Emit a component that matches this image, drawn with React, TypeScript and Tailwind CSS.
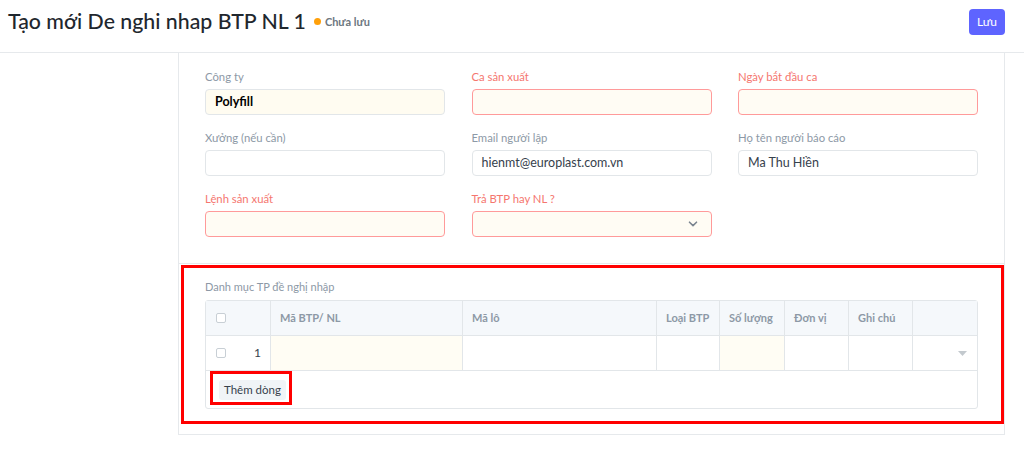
import React from 'react';

const font = { fontFamily: 'Lato, "Noto Sans", sans-serif' };

interface FieldProps {
  label: string;
  value?: string;
  required?: boolean;
  bold?: boolean;
  select?: boolean;
  filled?: boolean;
}

const Field: React.FC<FieldProps> = ({ label, value, required, bold, select, filled }) => {
  const box = required
    ? 'border-[#ff9a9a] bg-[#fffcf4]'
    : filled
    ? 'border-[#e2e6e9] bg-[#fffcf1]'
    : 'border-[#e2e6e9] bg-white';
  return (
    <div className="flex flex-col">
      <div className={`h-[18px] text-[11.3px] leading-[18px] ${required ? 'text-[#f5766f]' : 'text-[#8d99a6]'}`}>{label}</div>
      <div className={`mt-[3px] flex h-[26px] items-center justify-between rounded-[4px] border px-[9px] ${box}`}>
        <span className={`text-[12.5px] ${bold ? 'font-bold text-[#000]' : 'text-[#36414c]'}`}>{value}</span>
        {select && (
          <svg width="10" height="6" viewBox="0 0 10 6" className="mr-[4px]">
            <path d="M1.5 1.2 L5 4.6 L8.5 1.2" fill="none" stroke="#7b8590" strokeWidth="1.6" strokeLinecap="round" strokeLinejoin="round" />
          </svg>
        )}
      </div>
    </div>
  );
};

const Checkbox = () => (
  <span className="inline-block h-[10px] w-[10px] rounded-[2px] border border-[#c8cfd5] bg-white" />
);

const headers = [
  { label: 'Mã BTP/ NL', w: 'w-[192px]' },
  { label: 'Mã lô', w: 'w-[194px]' },
  { label: 'Loại BTP', w: 'w-[63px]' },
  { label: 'Số lượng', w: 'w-[65px]' },
  { label: 'Đơn vị', w: 'w-[64px]' },
  { label: 'Ghi chú', w: 'w-[64px]' },
];

export default function App() {
  return (
    <div className="min-h-screen bg-white" style={font}>
      <header className="flex h-[53px] items-center justify-between border-b border-[#e6e9ec] pb-[8px] pl-[8px] pr-[19px]">
        <div className="flex items-center">
          <h1 className="text-[21.3px] font-medium leading-none text-[#1f272e]">Tạo mới De nghi nhap BTP NL 1</h1>
          <span className="ml-[8px] inline-block h-[7px] w-[7px] rounded-full bg-[#ffa00a]" />
          <span className="ml-[4px] text-[11px] font-bold text-[#6c7680]">Chưa lưu</span>
        </div>
        <button className="h-[26px] w-[36px] rounded-[4px] bg-[#5e64ff] text-[12px] text-white">Lưu</button>
      </header>

      <main className="ml-[178px] w-[827px] border-x border-b border-[#e6e9ec]">
        <section className="grid grid-cols-[240px_240px_240px] justify-between gap-y-[14px] border-b border-[#e6e9ec] px-[26px] pb-[26px] pt-[15px]">
          <Field label="Công ty" value="Polyfill" bold filled />
          <Field label="Ca sản xuất" required />
          <Field label="Ngày bắt đầu ca" required />
          <Field label="Xưởng (nếu cần)" />
          <Field label="Email người lập" value="hienmt@europlast.com.vn" />
          <Field label="Họ tên người báo cáo" value="Ma Thu Hiền" />
          <Field label="Lệnh sản xuất" required />
          <Field label="Trả BTP hay NL ?" required select />
        </section>

        <section className="relative px-[26px] pb-[25px] pt-[14px]">
          <div className="h-[20px] text-[11px] leading-[18px] text-[#8d99a6]">Danh mục TP đề nghị nhập</div>
          <div className="mt-[2px] w-[773px] rounded-[3px] border border-[#e2e6e9]">
            <div className="flex h-[35px] border-b border-[#e2e6e9] bg-[#f5f8fb] text-[11px] font-bold text-[#8d99a6]">
              <div className="flex w-[65px] items-center border-r border-[#e2e6e9] pl-[10px]">
                <Checkbox />
              </div>
              {headers.map(h => (
                <div key={h.label} className={`flex ${h.w} items-center border-r border-[#e2e6e9] pl-[9px]`}>{h.label}</div>
              ))}
              <div className="flex-1" />
            </div>
            <div className="flex h-[35px] border-b border-[#e2e6e9] text-[12px] text-[#36414c]">
              <div className="flex w-[65px] items-center justify-between border-r border-[#e2e6e9] pl-[10px] pr-[9px]">
                <Checkbox />
                <span>1</span>
              </div>
              <div className="w-[192px] border-r border-[#e2e6e9] bg-[#fffdf4]" />
              <div className="w-[194px] border-r border-[#e2e6e9]" />
              <div className="w-[63px] border-r border-[#e2e6e9]" />
              <div className="w-[65px] border-r border-[#e2e6e9] bg-[#fffdf4]" />
              <div className="w-[64px] border-r border-[#e2e6e9]" />
              <div className="w-[64px] border-r border-[#e2e6e9]" />
              <div className="flex flex-1 items-center justify-end pr-[10px]">
                <svg width="9" height="5" viewBox="0 0 9 5">
                  <path d="M0 0 L9 0 L4.5 5 Z" fill="#c3c9ce" />
                </svg>
              </div>
            </div>
            <div className="relative flex h-[37px] items-center pl-[13px]">
              <button className="h-[20px] rounded-[3px] bg-[#f0f4f7] px-[5px] text-[11.5px] leading-[20px] text-[#36414c]">Thêm dòng</button>
              <div className="pointer-events-none absolute left-[4px] top-[0px] h-[34px] w-[82px] border-[3px] border-[#ff0000]" />
            </div>
          </div>
          <div className="pointer-events-none absolute bottom-[10px] left-[2px] right-[0px] top-[1px] border-[3px] border-[#ff0000]" />
        </section>
      </main>
    </div>
  );
}
